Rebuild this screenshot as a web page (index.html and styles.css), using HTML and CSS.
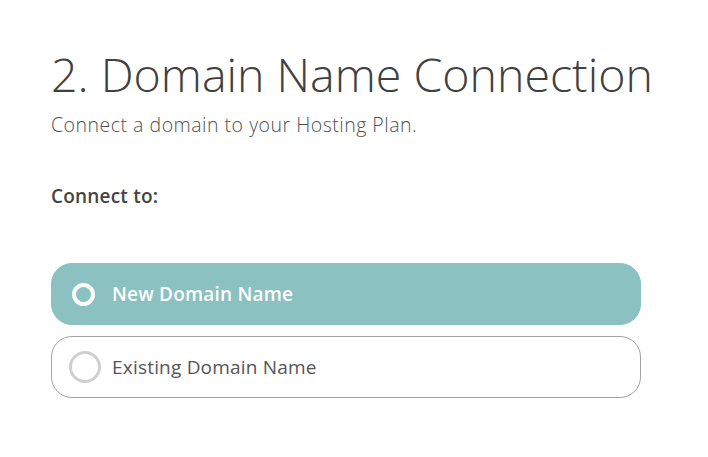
FILE: index.html
```
<!DOCTYPE html>
<html lang="en">

<head>
    <meta charset="utf-8">
    <meta name="viewport" content="width=device-width, initial-scale=1.0">
    <title>Domain Name Connection</title>
    <link rel="stylesheet" href="styles.css">
</head>

<body>
    <section class="step">
        <h1>2. Domain Name Connection</h1>
        <p class="intro">Connect a domain to your Hosting Plan.</p>
        <p class="label">Connect to:</p>

        <div class="options">
            <label class="option valgt">
                <span class="radio"></span>
                <span class="tekst">New Domain Name</span>
            </label>
            <label class="option">
                <span class="radio"></span>
                <span class="tekst">Existing Domain Name</span>
            </label>
        </div>
    </section>
</body>

</html>
```

FILE: styles.css
```
body {
    margin: 0;
    background-color: white;
    font-family: "Open Sans", Lato, sans-serif;
    color: #444;
}

.step {
    padding: 45px 0 0 51px;
}

h1 {
    margin: 0;
    font-size: 46.5px;
    font-weight: 300;
    line-height: 58px;
    white-space: nowrap;
    color: #404040;
}

.intro {
    margin: 10px 0 0;
    font-size: 19.5px;
    font-weight: 300;
    line-height: 24px;
    letter-spacing: 0.5px;
    color: #505050;
}

.label {
    margin: 47px 0 0;
    font-size: 19px;
    font-weight: 600;
    line-height: 24px;
    letter-spacing: 0.2px;
    color: #444;
}

.options {
    display: flex;
    flex-direction: column;
    gap: 11px;
    margin-top: 55px;
    width: 590px;
}

.option {
    display: flex;
    align-items: center;
    height: 62px;
    padding: 0 17px;
    box-sizing: border-box;
    border: 1px solid #a3a3a3;
    border-radius: 21px;
    cursor: pointer;
}

.radio {
    width: 32px;
    height: 32px;
    box-sizing: border-box;
    border: 3px solid #cfcfcf;
    border-radius: 50%;
}

.tekst {
    margin-left: 11px;
    font-size: 19px;
    letter-spacing: 0.2px;
    color: #555;
}

.valgt {
    background-color: #8cc1c1;
    border-color: #8cc1c1;
}

.valgt .radio {
    width: 23px;
    height: 23px;
    margin: 0 6px 0 3px;
    border: 4px solid white;
}

.valgt .tekst {
    color: white;
    font-weight: 600;
}
```
